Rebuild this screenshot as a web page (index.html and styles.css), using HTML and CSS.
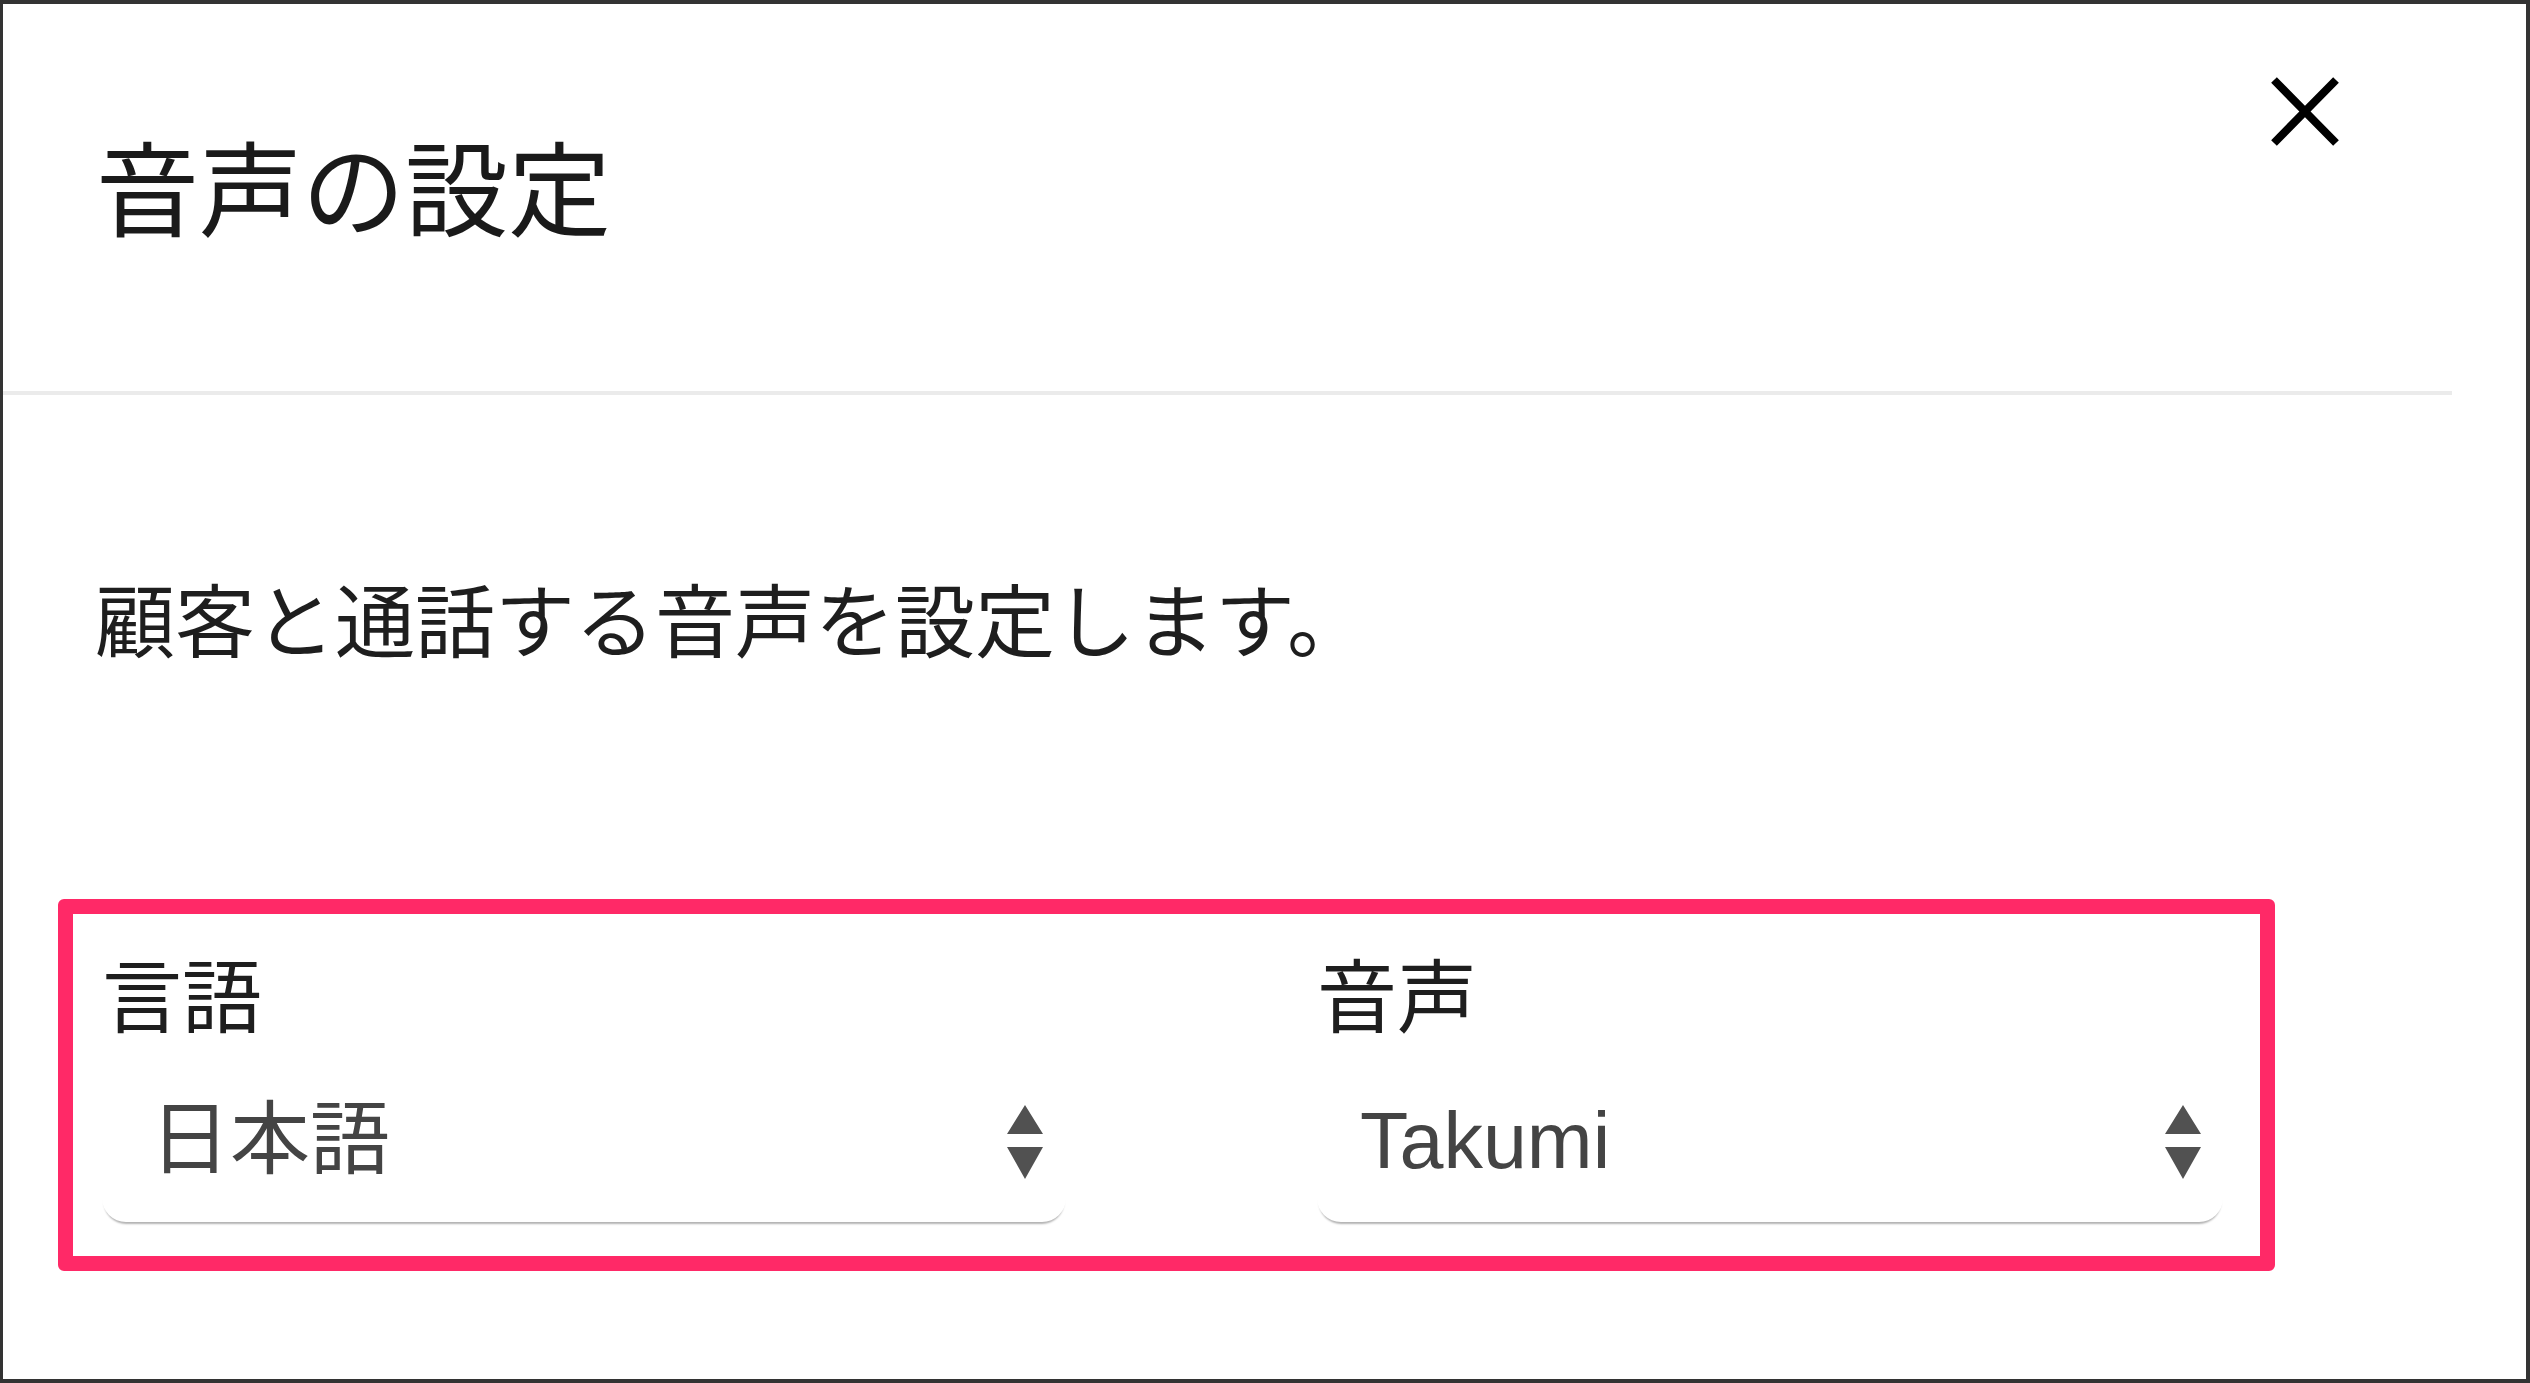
FILE: index.html
```html
<!DOCTYPE html>
<html lang="ja">
<head>
<meta charset="utf-8">
<title>音声の設定</title>
<link rel="stylesheet" href="styles.css">
</head>
<body>
<div class="frame">
  <header class="dialog-header">
    <h1 class="title">音声の設定</h1>
    <button class="close" type="button" aria-label="閉じる">
      <svg width="68" height="69" viewBox="0 0 68 69"><path d="M3 3 L65 66 M65 3 L3 66" stroke="#000" stroke-width="8" fill="none"/></svg>
    </button>
  </header>
  <main class="dialog-body">
    <p class="desc">顧客と通話する音声を設定します。</p>
    <div class="highlight">
      <div class="field field-lang">
        <div class="label">言語</div>
        <div class="select select-lang">
          <span class="value">日本語</span>
          <svg class="arrows" width="36" height="74" viewBox="0 0 36 74"><path d="M18 0 L36 29 L0 29 Z M0 42 L36 42 L18 74 Z" fill="#515151"/></svg>
        </div>
      </div>
      <div class="field field-voice">
        <div class="label">音声</div>
        <div class="select select-voice">
          <span class="value value-latin">Takumi</span>
          <svg class="arrows" width="36" height="74" viewBox="0 0 36 74"><path d="M18 0 L36 29 L0 29 Z M0 42 L36 42 L18 74 Z" fill="#515151"/></svg>
        </div>
      </div>
    </div>
  </main>
</div>
</body>
</html>
```

FILE: styles.css
```css
html, body {
  margin: 0;
  padding: 0;
  background: #ffffff;
}

body {
  font-family: "Noto Sans CJK JP", "Noto Sans CJK SC", sans-serif;
  font-weight: 400;
  color: #222222;
}

.frame {
  box-sizing: border-box;
  width: 2530px;
  height: 1383px;
  border: 4px solid #333333;
  border-left-width: 3px;
  background: #ffffff;
  overflow: hidden;
}

.dialog-header {
  display: flex;
  justify-content: space-between;
  align-items: flex-start;
  height: 387px;
  margin-right: 74px;
  border-bottom: 4px solid #ebebeb;
}

.title {
  margin: 121px 0 0 93px;
  font-size: 103px;
  line-height: 120px;
  font-weight: 400;
  color: #1a1a1a;
}

.close {
  margin: 73px 113px 0 0;
  width: 68px;
  height: 69px;
  padding: 0;
  border: 0;
  background: none;
  display: block;
}

.close svg {
  display: block;
}

.dialog-body {
  display: flex;
  flex-direction: column;
  align-items: flex-start;
}

.desc {
  margin: 171px 0 0 92px;
  font-size: 80px;
  line-height: 100px;
  color: #1e1e1e;
}

.highlight {
  box-sizing: border-box;
  display: flex;
  gap: 251px;
  width: 2217px;
  margin: 233px 0 0 55px;
  padding: 27px 37px 34px 29px;
  border: 15px solid #ff2967;
  border-radius: 6px;
}

.field {
  display: flex;
  flex-direction: column;
}

.field-lang {
  width: 964px;
}

.field-voice {
  width: 906px;
}

.label {
  font-size: 80px;
  line-height: 100px;
  color: #1e1e1e;
}

.select {
  box-sizing: border-box;
  display: flex;
  align-items: center;
  justify-content: space-between;
  height: 181px;
  padding: 0 23px 0 48px;
  background: #ffffff;
  border-radius: 24px;
  box-shadow: 0 4px 2px -2px rgba(0, 0, 0, 0.3);
}

.select-voice {
  padding-left: 43px;
  padding-right: 22px;
}

.value {
  font-size: 80px;
  line-height: 100px;
  color: #444444;
}

.value-latin {
  font-family: "Liberation Sans", Arial, sans-serif;
  font-weight: 400;
  font-size: 79px;
  padding-top: 18px;
}

.arrows {
  display: block;
  margin-top: 21px;
}
```
